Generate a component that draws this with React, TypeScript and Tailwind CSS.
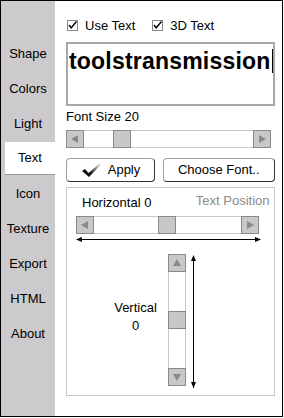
import React from 'react'

const tabs = ['Shape', 'Colors', 'Light', 'Text', 'Icon', 'Texture', 'Export', 'HTML', 'About']

function CheckBox({ label }: { label: string }) {
  return (
    <div className="flex items-center">
      <svg width="11" height="11" viewBox="0 0 11 11" className="mr-[7px]">
        <rect x="0.5" y="0.5" width="10" height="10" fill="white" stroke="#8a8a8a" />
        <path d="M2 5 L4.2 7.8 L9.5 1.5" fill="none" stroke="black" strokeWidth="1.4" />
      </svg>
      <span>{label}</span>
    </div>
  )
}

function ArrowBtn({ dir }: { dir: 'left' | 'right' | 'up' | 'down' }) {
  const pts = {
    left: '5,9 12,5 12,13',
    right: '13,9 6,5 6,13',
    up: '9,5 5,12 13,12',
    down: '9,13 5,6 13,6'
  }[dir]
  return (
    <div className="w-[18px] h-[18px] bg-[#c9c7c9] border border-[#8a8a8a] shrink-0">
      <svg width="16" height="16" viewBox="1 1 16 16">
        <polygon points={pts} fill="#8a8a8a" />
      </svg>
    </div>
  )
}

function HSlider({ width, thumbAt }: { width: number; thumbAt: number }) {
  return (
    <div className="flex h-[18px]" style={{ width }}>
      <ArrowBtn dir="left" />
      <div className="flex-1 border-y border-[#c8c8c8] bg-white relative">
        <div className="absolute top-[-1px] w-[18px] h-[18px] bg-[#c9c7c9] border border-[#8a8a8a]" style={{ left: thumbAt }} />
      </div>
      <ArrowBtn dir="right" />
    </div>
  )
}

export default function App() {
  return (
    <div className="w-[283px] h-[417px] border border-black flex bg-white text-[13px] text-black" style={{ fontFamily: '"Liberation Sans", Arial, sans-serif' }}>
      <div className="w-[54px] bg-[#cccacc] pt-[35px] flex flex-col">
        {tabs.map((t) => (
          <div key={t} className="h-[35px] flex items-center">
            {t === 'Text' ? (
              <div className="ml-[4px] w-[50px] h-[33px] bg-white border-b border-[#9a9a9a] flex items-center justify-center">{t}</div>
            ) : (
              <div className="w-full text-center">{t}</div>
            )}
          </div>
        ))}
      </div>

      <div className="flex-1 flex flex-col pl-[11px] pr-[10px] pt-[17px]">
        <div className="flex items-center h-[15px] pl-[1px]">
          <CheckBox label="Use Text" />
          <div className="ml-[17px]">
            <CheckBox label="3D Text" />
          </div>
        </div>

        <div className="mt-[9px] h-[64px] border-2 border-[#a8a8a8] bg-white flex items-start pt-[3px] pl-[1px] overflow-hidden">
          <span className="text-[23px] font-bold leading-[28px] whitespace-nowrap tracking-[0.2px]">toolstransmission</span>
          <span className="w-[1px] h-[24px] bg-black mt-[2px] ml-[1px]" />
        </div>

        <div className="mt-[3px] h-[16px] leading-[16px]">Font Size 20</div>

        <div className="mt-[5px]">
          <HSlider width={205} thumbAt={29} />
        </div>

        <div className="mt-[10px] flex gap-[8px] h-[24px]">
          <button className="w-[89px] h-full rounded-[4px] border border-[#a0a0a0] border-r-[#333] border-b-[#333] flex items-center justify-center bg-white">
            <svg width="21" height="16" viewBox="0 0 21 16" className="mr-[6px]">
              <defs>
                <linearGradient id="chk" x1="0" y1="1" x2="1" y2="0">
                  <stop offset="0.35" stopColor="#111" />
                  <stop offset="1" stopColor="#fff" />
                </linearGradient>
              </defs>
              <path d="M1 9 L4 7 L7.5 11 L19 1 L20 2.5 L8 15 Z" fill="url(#chk)" />
            </svg>
            Apply
          </button>
          <button className="flex-1 h-full rounded-[4px] border border-[#a0a0a0] border-r-[#333] border-b-[#333] flex items-center justify-center bg-white">
            Choose Font..
          </button>
        </div>

        <div className="mt-[5px] h-[209px] border border-[#c8c8c8] flex flex-col">
          <div className="flex justify-between items-start pt-[3px] pl-[15px] pr-[4px] h-[23px]">
            <span className="mt-[2px]">Horizontal 0</span>
            <span className="text-[#8a8a8a]">Text Position</span>
          </div>
          <div className="ml-[9px] mt-[5px]">
            <HSlider width={183} thumbAt={64} />
          </div>
          <svg width="186" height="7" viewBox="0 0 186 7" className="ml-[9px] mt-[2px]">
            <line x1="1" y1="3.5" x2="184" y2="3.5" stroke="black" strokeWidth="1" />
            <polygon points="0,3.5 6,1 6,6" fill="black" />
            <polygon points="185,3.5 179,1 179,6" fill="black" />
          </svg>
          <div className="flex mt-[11px] h-[133px]">
            <div className="w-[101px] flex flex-col items-center justify-center pl-[36px] pb-[8px] leading-[18px]">
              <span>Vertical</span>
              <span>0</span>
            </div>
            <div className="flex flex-col w-[18px] h-[132px]">
              <ArrowBtn dir="up" />
              <div className="flex-1 border-x border-[#c8c8c8] bg-white relative">
                <div className="absolute left-[-1px] w-[18px] h-[18px] bg-[#c9c7c9] border border-[#8a8a8a]" style={{ top: 39 }} />
              </div>
              <ArrowBtn dir="down" />
            </div>
            <svg width="7" height="134" viewBox="0 0 7 134" className="ml-[4px] mt-[1px]">
              <line x1="3.5" y1="1" x2="3.5" y2="133" stroke="black" strokeWidth="1" />
              <polygon points="3.5,0 1,6 6,6" fill="black" />
              <polygon points="3.5,133 1,127 6,127" fill="black" />
            </svg>
          </div>
        </div>
      </div>
    </div>
  )
}
